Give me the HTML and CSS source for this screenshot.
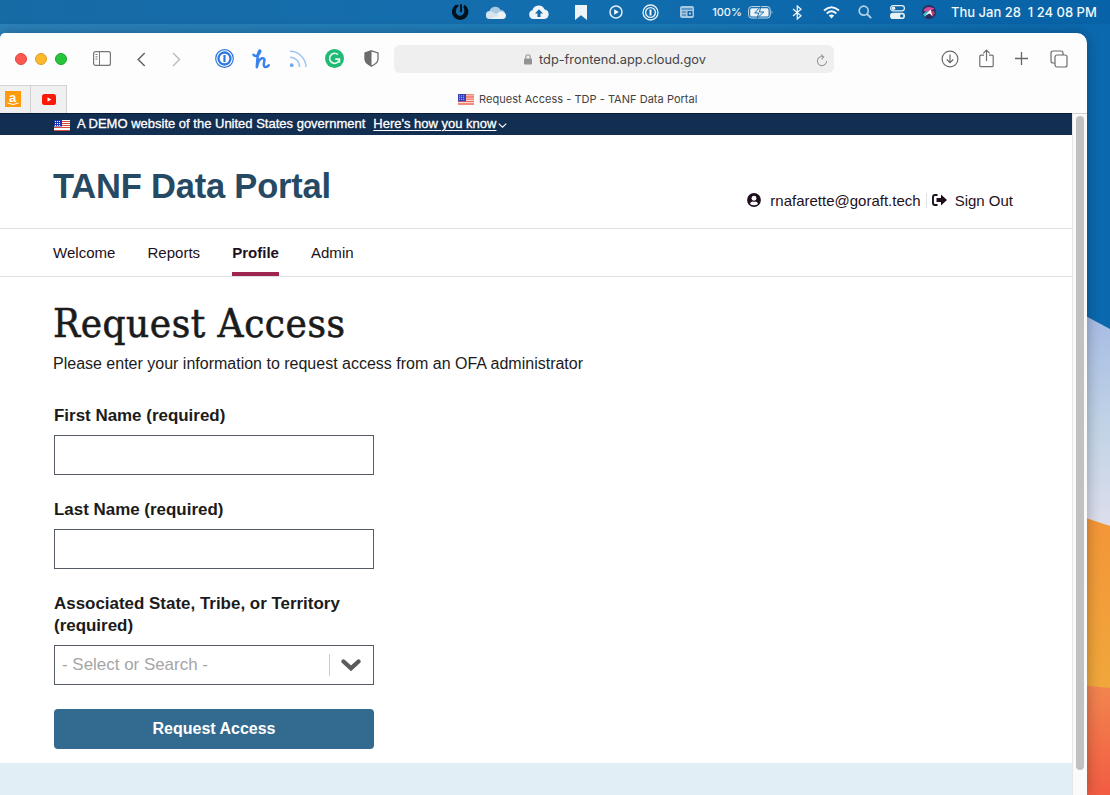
FILE: index.html
```html
<!DOCTYPE html>
<html lang="en">
<head>
<meta charset="utf-8">
<title>Request Access - TDP - TANF Data Portal</title>
<link rel="stylesheet" href="styles.css">
</head>
<body>
<svg class="wallpaper" width="1110" height="795" viewBox="0 0 1110 795">
  <defs>
    <linearGradient id="sky" x1="0" y1="0" x2="1" y2="0"><stop offset="0" stop-color="#2c83bb"/><stop offset=".6" stop-color="#1b7bb9"/><stop offset="1" stop-color="#0a69ae"/></linearGradient>
    <linearGradient id="pale" gradientUnits="userSpaceOnUse" x1="0" y1="313" x2="0" y2="526"><stop offset="0" stop-color="#a6bbe4"/><stop offset=".5" stop-color="#bfd2e6"/><stop offset="1" stop-color="#dcdeec"/></linearGradient>
    <linearGradient id="amber" gradientUnits="userSpaceOnUse" x1="0" y1="516" x2="0" y2="688"><stop offset="0" stop-color="#f39538"/><stop offset="1" stop-color="#f0a73b"/></linearGradient>
    <linearGradient id="coral" x1="0" y1="0" x2="0" y2="1"><stop offset="0" stop-color="#f2854f"/><stop offset="1" stop-color="#f25c42"/></linearGradient>
  </defs>
  <rect width="1110" height="795" fill="url(#sky)"/>
  <path d="M1080 313 1110 329V795H1080z" fill="url(#pale)"/>
  <path d="M1080 516 1110 526V795H1080z" fill="url(#amber)"/>
  <path d="M1080 685 1110 688V795H1080z" fill="url(#coral)"/>
</svg>
<div class="desktop">
  <header class="menubar">
    <svg width="18" height="18" viewBox="0 0 18 18"><path d="M5.500 2.800A7 7 0 1 0 13 2.900" fill="none" stroke="#03111b" stroke-width="2.600"/><path d="M6.200 1.600 8 2.800C5.500 4.500 4.500 7 5 9.500a4.200 4.200 0 0 0 8 .500c.8-2 .2-4.500-.5-6L14.500 4A7 7 0 0 1 15 13 7.500 7.500 0 0 1 2.500 12C1 8 3 3.500 6.200 1.600z" fill="#03111b"/><path d="M10 2v6.200" stroke="#03111b" stroke-width="1.900" stroke-linecap="round"/></svg>
    <svg width="20" height="13" viewBox="0 0 20 13"><path d="M4 13a4 4 0 0 1-.5-8A6 6 0 0 1 14.500 4 4.600 4.600 0 0 1 16 13z" fill="#a8cbe2"/><path d="M3 13 13 6.200C15 5 20 6.500 20 9.700c0 2-1.600 3.300-3.500 3.300z" fill="#edf3f7"/><path d="M0 9.500C0 6 4 4 6.500 6L13 9.500 4 13C2 13 0 11.500 0 9.500z" fill="#d5e5f0"/></svg>
    <svg width="20" height="14" viewBox="0 0 20 14"><path d="M4.800 14A4.500 4.500 0 0 1 3.400 5.200 6.500 6.500 0 0 1 15.600 4.500 4.800 4.800 0 0 1 15.500 14z" fill="#eef4f8"/><path d="M10 4.300 14 8.500h-2.500V12h-3V8.500H6z" fill="#146aa9"/></svg>
    <svg width="12" height="15" viewBox="0 0 12 15"><path d="M0 0h12v15L6 10.300 0 15z" fill="#edf4f8"/></svg>
    <svg width="14" height="14" viewBox="0 0 14 14"><circle cx="7" cy="7" r="6" fill="none" stroke="#e5eff6" stroke-width="1.500"/><path d="M5.200 4.200v5.600L9.800 7z" fill="#fff"/></svg>
    <svg width="17" height="17" viewBox="0 0 17 17"><circle cx="8.500" cy="8.500" r="7.500" fill="none" stroke="#e5eff6" stroke-width="1.300"/><circle cx="8.500" cy="8.500" r="4.900" fill="none" stroke="#e5eff6" stroke-width="1.400"/><path d="M8.500 5.500v6" stroke="#fff" stroke-width="1.900"/></svg>
    <svg width="14" height="12" viewBox="0 0 14 12"><rect width="14" height="12" rx="2" fill="#a9c9e2"/><path d="M1.500 3h11M2 6h4M2 9h4" stroke="#1767a7" stroke-width="1.100"/><rect x="7.500" y="5" width="5" height="5" fill="#1767a7"/><rect x="9" y="6.500" width="2" height="2" fill="#a9c9e2"/></svg>
    <div class="battery"><span>100%</span><svg width="25" height="13" viewBox="0 0 25 13"><rect x=".6" y=".6" width="21.600" height="11.400" rx="3" fill="none" stroke="#c4dbea"/><rect x="2.200" y="2.200" width="18.400" height="8.200" rx="1.500" fill="#edf4f8"/><path d="M12.800.4 6.700 7h4.100l-1.700 5.200L15.800 6h-4.300z" fill="#edf4f8" stroke="#1369aa"/><path d="M23.500 4.500q1.800 1.700 0 3.600" fill="#a0c5df"/></svg></div>
    <svg width="11" height="15" viewBox="0 0 11 15"><path d="M1 4 9 10.700 5.300 14V1L9 4.300 1 11" fill="none" stroke="#edf4f8" stroke-width="1.300"/></svg>
    <svg width="17" height="13" viewBox="0 0 17 13"><path d="M1 4.600Q8.500-2 16 4.600M3.700 7.400q4.800-4.200 9.600 0" fill="none" stroke="#f0f6fa" stroke-width="2"/><path d="M8.500 12.500 5.800 9.600q2.700-2 5.400 0z" fill="#f0f6fa"/></svg>
    <svg width="14" height="14" viewBox="0 0 14 14"><circle cx="5.700" cy="5.700" r="4.500" fill="none" stroke="#b3d0e5" stroke-width="1.700"/><path d="m9 9 4.200 4.200" stroke="#b3d0e5" stroke-width="1.800"/></svg>
    <svg width="15" height="14" viewBox="0 0 15 14"><rect x=".6" y=".6" width="13.800" height="5.200" rx="2.600" fill="none" stroke="#e8f1f6" stroke-width="1.200"/><circle cx="3.500" cy="3.200" r="1.800" fill="#e8f1f6"/><rect y="7.800" width="15" height="6.200" rx="3.100" fill="#e8f1f6"/><circle cx="11.700" cy="10.900" r="1.700" fill="#1569aa"/></svg>
    <svg width="14" height="14" viewBox="0 0 14 14"><circle cx="7" cy="7" r="7" fill="#27305d"/><path d="M1.500 6Q4-.500 12.500 3.500L7 7z" fill="#d84b9b"/><path d="M1 9.500Q3 5.500 8 6l-5 6z" fill="#36b8c5"/><path d="M7 6.500Q12 4.500 13 8l-3 4z" fill="#b93a6b"/><path d="M8.500 4.500 10.500 11 7.500 8.500 3 10.500z" fill="#fff"/></svg>
    <span class="clock">Thu Jan 28&nbsp; 1 24 08 PM</span>
  </header>

  <main class="window">
    <div class="toolbar">
      <div class="lights"><i class="close"></i><i class="min"></i><i class="max"></i></div>
      <svg class="t-side" width="18" height="15" viewBox="0 0 18 15" fill="none" stroke="#77777a"><rect x=".6" y=".6" width="16.800" height="13.800" rx="2" stroke-width="1.200"/><path d="M6.500 1v13M2.500 3.500h2M2.500 5.800h2M2.500 8h2"/></svg>
      <svg class="t-back" width="9" height="15" viewBox="0 0 9 15"><path d="M7.700 1 1.200 7.500l6.500 6.500" fill="none" stroke="#66666a" stroke-width="1.500"/></svg>
      <svg class="t-fwd" width="9" height="15" viewBox="0 0 9 15"><path d="m1 1 6.500 6.500L1 14" fill="none" stroke="#b9b9bb" stroke-width="1.400"/></svg>
      <svg class="t-pass" width="19" height="19" viewBox="0 0 19 19" fill="none" stroke="#2f78e2"><circle cx="9.500" cy="9.500" r="8.800" stroke-width="1.200"/><circle cx="9.500" cy="9.500" r="6" stroke-width="2.300"/><path d="M9.500 6v7" stroke-width="2.200"/></svg>
      <svg class="t-honey" width="18" height="20" viewBox="0 0 18 20"><path d="M1.500 5.800Q3.500 8.300 6.500 5.500 9.300 1.800 7.800 1.500 5.800 1.200 4.800 18.300 6.500 10 10 9.200q3.200-.4 2.200 3.500-1.200 4.700.8 5.300 2 .400 3.700-1.800" fill="none" stroke="#3a82ef" stroke-width="2.500" stroke-linecap="round" stroke-linejoin="round"/></svg>
      <svg class="t-rss" width="18" height="18" viewBox="0 0 18 18" fill="none" stroke="#9cc3f4" stroke-width="1.400"><path d="M1 1.300A16 16 0 0 1 17 17M1 7.300a9.500 9.500 0 0 1 9.600 9.700"/><circle cx="2.700" cy="15.200" r="1.900" fill="#73a9ef" stroke="none"/></svg>
      <svg class="t-gram" width="19" height="19" viewBox="0 0 19 19"><circle cx="9.500" cy="9.500" r="9.500" fill="#20ba74"/><path d="M13 5.600A5 5 0 1 0 14.300 11M10.200 10.200h4.200v3.600" fill="none" stroke="#e5f8ef" stroke-width="1.700"/></svg>
      <svg class="t-shield" width="15" height="17" viewBox="0 0 15 17"><path d="M7.500.8 14 3v6.500q-.5 3.800-6.500 6.700Q1.500 13.300 1 9.500V3z" fill="none" stroke="#6c6c6e" stroke-width="1.300"/><path d="M7.500.8 1 3v6.500q.5 3.800 6.500 6.700z" fill="#6c6c6e"/></svg>
      <div class="address">
        <svg width="8" height="11" viewBox="0 0 8 11"><rect y="4.500" width="8" height="6" rx="1" fill="#929292"/><path d="M1.800 5V3a2.200 2.200 0 0 1 4.400 0v2" fill="none" stroke="#999" stroke-width="1.100"/></svg>
        <span>tdp-frontend.app.cloud.gov</span>
        <svg class="reload" width="12" height="13" viewBox="0 0 12 13" fill="none" stroke="#99999b" stroke-width="1.100"><path d="M7.500 2.700A4.600 4.600 0 1 0 10.600 7M5 .6l2.700 2.200L5.500 5.300"/></svg>
      </div>
      <svg class="t-down" width="18" height="18" viewBox="0 0 18 18" fill="none" stroke="#6b6b6d" stroke-width="1.200"><circle cx="9" cy="9" r="7.900"/><path d="M9 4.500v8M5.800 9.500 9 12.700l3.200-3.200"/></svg>
      <svg class="t-share" width="15" height="19" viewBox="0 0 15 19" fill="none" stroke="#6f6f71" stroke-width="1.200"><path d="M5 6.200H2q-1.200 0-1.200 1.200v9q0 1.300 1.200 1.300h11q1.200 0 1.200-1.300v-9q0-1.200-1.200-1.200h-3M7.500 12V1M4.300 4.300 7.500 1l3.200 3.300"/></svg>
      <svg class="t-plus" width="13" height="13" viewBox="0 0 13 13"><path d="M6.500 0v13M0 6.500h13" stroke="#66666a" stroke-width="1.300"/></svg>
      <svg class="t-tabs" width="18" height="18" viewBox="0 0 18 18" fill="none" stroke="#6b6b6d" stroke-width="1.200"><rect x="5" y="5" width="12" height="12" rx="2"/><path d="M5 13H3q-2 0-2-2V3q0-2 2-2h8q2 0 2 2v2"/></svg>
    </div>

    <div class="tabs">
      <div class="pin pin-a"><svg width="16" height="16" viewBox="0 0 16 16"><rect width="16" height="16" fill="#ff9a0b"/><text x="4" y="10.800" class="glyph">a</text><path d="M2.500 12q5.500 3 11 0" fill="none" stroke="#fff"/></svg></div>
      <div class="pin pin-y"><svg width="14" height="11" viewBox="0 0 14 11"><rect width="14" height="11" rx="2.500" fill="#fb1808"/><path d="M5.500 3.300v4.400L9.300 5.500z" fill="#fff"/></svg></div>
      <div class="active-tab">
        <svg width="16" height="11" viewBox="0 0 16 11"><rect width="16" height="11" fill="#fff"/><path d="M0 .8h16M0 3h16M0 5.200h16M0 7.500h16M0 10h16" stroke="#ec6651" stroke-width="1.300"/><rect width="8" height="7.300" fill="#3643ba"/><path d="M1 1.800h6M1 3.600h6M1 5.400h6" stroke="#a5aae2" stroke-dasharray="1 1"/></svg>
        <span>Request Access - TDP - TANF Data Portal</span>
      </div>
    </div>

    <div class="viewport">
      <div class="site">
        <div class="banner">
          <svg class="flag" width="16" height="11" viewBox="0 0 16 11"><rect width="16" height="11" fill="#fff"/><path d="M0 1.500h16M0 3.500h16M0 5.500h16M0 7.500h16M0 10.500h16" stroke="#d84b3e"/><rect width="8" height="6.500" fill="#1e33b1"/><path d="M1 1.500h6M1 3.500h6M1 5.500h6" stroke="#fff" stroke-dasharray="1 1"/></svg>
          <span class="demo">A DEMO website of the United States government</span>
          <a>Here's how you know</a>
          <svg class="caret" width="9" height="5" viewBox="0 0 9 5"><path d="m.7.700 3.800 3.500L8.300.700" fill="none" stroke="#fff" stroke-width="1.100"/></svg>
        </div>
        <div class="masthead">
          <div class="brand">TANF Data Portal</div>
          <div class="account">
            <svg width="14" height="14" viewBox="0 0 15 15"><circle cx="7.500" cy="7.500" r="7.400" fill="#1f1020"/><circle cx="7.500" cy="5.600" r="2.600" fill="#fff"/><path d="M3.200 11.700q.5-2.700 2.700-2.700 1.600.7 3.200 0 2.200 0 2.700 2.700-4.300 3-8.600 0z" fill="#fff"/></svg>
            <span class="email">rnafarette@goraft.tech</span>
            <svg class="signout" width="15" height="12" viewBox="0 0 15 12"><path d="M5.500 1H3Q1 1 1 3v6q0 2 2 2h2.500" fill="none" stroke="#1f1020" stroke-width="1.900"/><path d="M4.500 4H9V.5L15 6l-6 5.500V8H4.500z" fill="#1f1020"/></svg>
            <span class="out">Sign Out</span>
          </div>
        </div>
        <nav class="nav"><a class="n1">Welcome</a><a class="n2">Reports</a><a class="n3">Profile</a><a class="n4">Admin</a></nav>
        <form class="content">
          <h1>Request Access</h1>
          <p>Please enter your information to request access from an OFA administrator</p>
          <label><span>First Name (required)</span></label>
          <div class="field"></div>
          <label><span>Last Name (required)</span></label>
          <div class="field"></div>
          <label><span>Associated State, Tribe, or Territory (required)</span></label>
          <div class="field select"><span>- Select or Search -</span><b><svg width="20" height="13" viewBox="0 0 20 13"><path d="m2.500 2.500 7.500 6.800 7.500-6.800" fill="none" stroke="#5b5b5b" stroke-width="4.300" stroke-linecap="round"/></svg></b></div>
          <div class="submit">Request Access</div>
        </form>
        <footer class="footer"></footer>
      </div>
      <div class="scroll"><i></i></div>
    </div>
  </main>
</div>
</body>
</html>
```

FILE: styles.css
```css
* { box-sizing: border-box; }
body { margin: 0; width: 1110px; height: 795px; overflow: hidden; font-family: "Liberation Sans", Arial, sans-serif; color: #1b1b1b; background: #0d6bad; }
svg { display: block; flex: none; }
.wallpaper { position: absolute; left: 0; top: 0; }
.desktop { position: relative; height: 795px; display: flex; flex-direction: column; }

.menubar { height: 24px; flex: none; display: grid; padding-left: 441px; grid-template-columns: 37px 36px 50px 34px 35px 35px 38px 73px 36px 32px 36px 28px 36px auto; align-items: center; justify-items: center; justify-content: start; background: linear-gradient(90deg, #176ba5, #136eaf 50%, #0762a7); color: #f2f7fa; font-family: Inter, sans-serif; white-space: nowrap; margin-bottom: 9px; }
.battery { display: flex; gap: 6px; align-items: center; font-size: 11px; font-weight: 500; }
.clock { font-size: 13px; font-weight: 500; margin: -1px 0 0 4px; }

.window { width: 1087px; height: 762px; background: #fdfdfd; border-radius: 5px 10px 0 0; overflow: hidden; box-shadow: 0 0 14px rgba(0, 0, 0, .3); display: flex; flex-direction: column; }
.toolbar { height: 52px; display: flex; align-items: center; padding-left: 15px; flex: none; }
.lights { display: flex; gap: 8px; }
.lights i { width: 12px; height: 12px; border-radius: 50%; }
.close { background: #fe5850; border: 1px solid #df4740; }
.min { background: #fdb92b; border: 1px solid #dca022; }
.max { background: #27c53c; border: 1px solid #1ba52b; }
.t-side { margin: -1px 0 0 26px; }
.t-back { margin-left: 26px; }
.t-fwd { margin-left: 26px; }
.t-pass { margin: -1px 0 0 34px; }
.t-honey { margin-left: 18px; }
.t-rss { margin-left: 19px; }
.t-gram { margin: -1px 0 0 18px; }
.t-shield { margin: -1px 0 0 20px; }
.address { margin-left: 15px; width: 440px; height: 28px; border-radius: 6px; background: #efefef; display: flex; align-items: center; padding: 0 6px 0 130px; font: 12.800px Inter, sans-serif; color: #454545; }
.address span { margin-left: 7px; white-space: nowrap; }
.reload { margin: 3px 0 0 auto; }
.t-down { margin-left: 107px; }
.t-share { margin: -1px 0 0 20px; }
.t-plus { margin: -1px 0 0 21px; }
.t-tabs { margin: -1px 0 0 22px; }

.tabs { height: 28px; flex: none; display: flex; }
.pin { background: #f0f0f0; border-top: 1px solid #d4d4d4; border-right: 1px solid #d2d2d2; display: flex; align-items: center; }
.pin-a { width: 31px; padding: 0 0 1px 5px; }
.pin-y { width: 36px; padding: 0 0 1px 11px; }
.glyph { font: bold 13px "Liberation Sans", sans-serif; fill: #fff; }
.active-tab { display: flex; align-items: center; margin-left: 391px; font: 11px Inter, sans-serif; letter-spacing: .03px; color: #414141; white-space: nowrap; }
.active-tab span { margin-left: 5px; }

.viewport { display: flex; flex: 1; min-height: 0; }
.site { width: 1072px; background: #fff; display: flex; flex-direction: column; }
.scroll { width: 15px; background: #fafafa; border-left: 1px solid #e6e6e6; border-top: 1px solid #d0d0d0; padding: 2px 0 0 3px; }
.scroll i { display: block; width: 8px; height: 654px; border-radius: 4px; background: #c1c1c1; }
.banner { height: 22px; flex: none; background: #122e51; border-top: 1px solid #071b38; padding: 0 0 2px 54px; display: flex; align-items: center; color: #fff; font-size: 13px; white-space: nowrap; -webkit-text-stroke: .3px #fff; }
.flag { margin-top: 3px; }
.demo { margin-left: 7px; }
.banner a { margin-left: 8px; text-decoration: underline; text-underline-offset: 2px; }
.caret { margin: 4px 0 0 2px; }
.masthead { height: 94px; flex: none; border-bottom: 1px solid #dfe1e2; padding: 0 59px 0 53px; display: flex; justify-content: space-between; }
.brand { font-size: 34.500px; letter-spacing: -.2px; font-weight: 700; line-height: 42px; margin-top: 30px; color: #264a64; white-space: nowrap; }
.account { display: flex; align-items: center; height: 20px; margin-top: 55px; font-size: 15px; color: #1f1020; white-space: nowrap; }
.email { margin-left: 9px; padding-right: 5px; border-right: 1px solid #dfe1e2; line-height: 15px; }
.signout { margin-left: 5px; }
.out { margin-left: 8px; }
.nav { height: 48px; flex: none; border-bottom: 1px solid #dfe1e2; padding-left: 53px; display: flex; gap: 32px; font-size: 15.050px; color: #1f1020; }
.nav a { line-height: 48px; height: 47px; white-space: nowrap; }
.nav .n3 { font-weight: 700; border-bottom: 4px solid #a02652; }
.content { height: 486px; flex: none; padding-left: 54px; }
h1 { margin: 23px 0 0 -1px; font: 40px/46px "DejaVu Serif Condensed", "DejaVu Serif", serif; font-stretch: condensed; letter-spacing: .55px; -webkit-text-stroke: .6px #1b1b1b; white-space: nowrap; }
p { margin: 7px 0 0 -1px; font-size: 16px; line-height: 22px; white-space: nowrap; }
label { display: block; margin-top: 30px; width: 320px; font-size: 16.960px; line-height: 22px; font-weight: 700; }
.field + label { margin-top: 24px; }
.field { width: 320px; height: 40px; border: 1px solid #565c65; background: #fff; margin-top: 8px; }
.select { display: flex; align-items: center; justify-content: space-between; font-size: 16.960px; color: #a5a5a5; padding-left: 7px; }
.select b { width: 44px; height: 22px; border-left: 1px solid #ccc; display: flex; align-items: center; padding-left: 11px; }
.submit { width: 320px; height: 40px; margin-top: 24px; border-radius: 4px; background: #336b90; color: #fff; font-size: 16px; font-weight: 700; display: flex; align-items: center; justify-content: center; }
.footer { flex: 1; background: #e1eef6; }
```
